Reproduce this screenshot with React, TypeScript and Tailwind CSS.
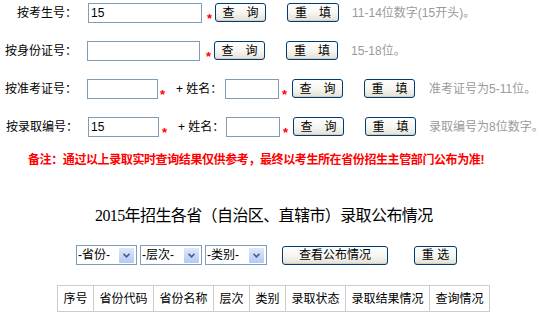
import React from 'react';

function XpButton({ text, className }: { text: string; className: string }) {
  return (
    <button
      className={`flex shrink-0 items-center justify-center whitespace-nowrap rounded-[3px] border border-[#003c74] bg-gradient-to-b from-white via-[#f7f6f1] to-[#e3e1d6] text-[12px] leading-none text-black shadow-[inset_0_-1px_0_#d6d0c0] ${className}`}
    >
      {text}
    </button>
  );
}

function Star({ className }: { className: string }) {
  return <span className={`shrink-0 text-[13px] font-bold leading-none text-[#ff0000] ${className}`}>*</span>;
}

function Box({ value, className }: { value?: string; className: string }) {
  return (
    <div className={`flex h-[20px] shrink-0 items-center border border-[#7f9db9] bg-white pl-[2px] text-[12px] text-black ${className}`}>
      {value}
    </div>
  );
}

function Hint({ text, className }: { text: string; className: string }) {
  return <span className={`shrink-0 whitespace-nowrap text-[12px] leading-[20px] text-[#9a9a9a] ${className}`}>{text}</span>;
}

function Select({ label, className }: { label: string; className: string }) {
  return (
    <div className={`flex h-[20px] shrink-0 items-center justify-between border border-[#7f9db9] bg-white pl-[1px] pr-[2px] text-[12px] ${className}`}>
      <span className="leading-none">{label}</span>
      <span className="flex h-[15px] w-[15px] items-center justify-center rounded-[1px] bg-gradient-to-b from-[#dde8fc] to-[#b4c9f4]">
        <svg width="7" height="5" viewBox="0 0 7 5">
          <path d="M0.5 0.8 L3.5 3.8 L6.5 0.8" fill="none" stroke="#4d6185" strokeWidth="1.6" />
        </svg>
      </span>
    </div>
  );
}

const columns = [
  { title: '序号', w: 'w-[36px]' },
  { title: '省份代码', w: 'w-[60px]' },
  { title: '省份名称', w: 'w-[60px]' },
  { title: '层次', w: 'w-[36px]' },
  { title: '类别', w: 'w-[36px]' },
  { title: '录取状态', w: 'w-[60px]' },
  { title: '录取结果情况', w: 'w-[84px]' },
  { title: '查询情况', w: 'w-[60px]' },
];

export default function App() {
  return (
    <div className="min-h-[327px] w-[543px] overflow-hidden bg-white pt-[3px] font-['Liberation_Sans','Noto_Sans_CJK_SC',sans-serif] text-[12px] text-black">
      {/* 按考生号 */}
      <div className="flex h-[20px] items-start whitespace-nowrap">
        <span className="w-[77px] shrink-0 text-right leading-[20px]">按考生号：</span>
        <Box value="15" className="ml-[11px] w-[114px]" />
        <Star className="ml-[5px] mt-[9px] w-[8px]" />
        <XpButton text="查　询" className="h-[19px] w-[51px]" />
        <XpButton text="重　填" className="ml-[21px] h-[19px] w-[52px]" />
        <Hint text="11-14位数字(15开头)。" className="ml-[13px]" />
      </div>

      {/* 按身份证号 */}
      <div className="mt-[18px] flex h-[20px] items-start whitespace-nowrap">
        <span className="w-[77px] shrink-0 text-right leading-[20px]">按身份证号：</span>
        <Box className="ml-[10px] w-[113px]" />
        <Star className="ml-[6px] mt-[9px] w-[8px]" />
        <XpButton text="查　询" className="h-[19px] w-[51px]" />
        <XpButton text="重　填" className="ml-[21px] h-[19px] w-[52px]" />
        <Hint text="15-18位。" className="ml-[13px]" />
      </div>

      {/* 按准考证号 */}
      <div className="mt-[18px] flex h-[20px] items-start whitespace-nowrap">
        <span className="w-[77px] shrink-0 text-right leading-[20px]">按准考证号：</span>
        <Box className="ml-[10px] w-[71px]" />
        <Star className="ml-[2px] mt-[9px] w-[8px]" />
        <span className="ml-[8px] w-[48px] shrink-0 leading-[20px]">+ 姓名：</span>
        <Box className="ml-[1px] w-[54px]" />
        <Star className="ml-[3px] mt-[9px] w-[10px]" />
        <XpButton text="查　询" className="h-[19px] w-[51px]" />
        <XpButton text="重　填" className="ml-[21px] h-[19px] w-[51px]" />
        <Hint text="准考证号为5-11位。" className="ml-[14px]" />
      </div>

      {/* 按录取编号 */}
      <div className="mt-[18px] flex h-[20px] items-start whitespace-nowrap">
        <span className="w-[78px] shrink-0 text-right leading-[20px]">按录取编号：</span>
        <Box value="15" className="ml-[10px] w-[71px]" />
        <Star className="ml-[3px] mt-[9px] w-[8px]" />
        <span className="ml-[8px] w-[47px] shrink-0 leading-[20px]">+ 姓名：</span>
        <Box className="ml-[1px] w-[54px]" />
        <Star className="ml-[3px] mt-[9px] w-[10px]" />
        <XpButton text="查　询" className="h-[19px] w-[51px]" />
        <XpButton text="重　填" className="ml-[21px] h-[19px] w-[51px]" />
        <Hint text="录取编号为8位数字。" className="ml-[13px]" />
      </div>

      {/* 备注 */}
      <p className="ml-[28px] mt-[17px] whitespace-nowrap text-[12px] font-bold leading-[12px] tracking-[-0.4px] text-[#ff0000]">
        备注：通过以上录取实时查询结果仅供参考，最终以考生所在省份招生主管部门公布为准!
      </p>

      {/* 标题 */}
      <h2 className="ml-[95px] mt-[42px] whitespace-nowrap font-['Liberation_Serif','Noto_Sans_CJK_SC',serif] text-[16px] font-normal leading-[16px] tracking-[-0.6px]">
        2015年招生各省（自治区、直辖市）录取公布情况
      </h2>

      {/* 筛选 */}
      <div className="mt-[21px] flex items-center pl-[76px]">
        <Select label="-省份-" className="w-[61px]" />
        <Select label="-层次-" className="ml-[3px] w-[62px]" />
        <Select label="-类别-" className="ml-[3px] w-[62px]" />
        <XpButton text="查看公布情况" className="ml-[15px] h-[19px] w-[106px]" />
        <XpButton text="重 选" className="ml-[26px] h-[19px] w-[43px]" />
      </div>

      {/* 表格 */}
      <table className="ml-[57px] mt-[20px] border-collapse">
        <thead>
          <tr>
            {columns.map((c) => (
              <th key={c.title} className={`h-[26px] border border-[#cccccc] p-0 text-center text-[12px] font-normal ${c.w}`}>
                {c.title}
              </th>
            ))}
          </tr>
        </thead>
      </table>
    </div>
  );
}
